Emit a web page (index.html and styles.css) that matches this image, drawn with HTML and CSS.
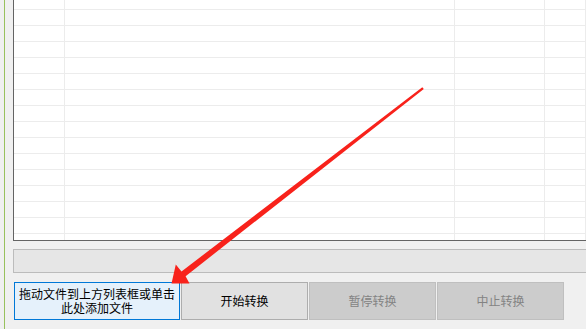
FILE: index.html
```html
<!DOCTYPE html>
<html lang="zh-CN">
<head>
<meta charset="UTF-8">
<title>格式转换</title>
<link rel="stylesheet" href="styles.css">
</head>
<body>
<div class="frame">
    <div class="content">
        <div class="file-list">
            <div class="rows">
                <div class="row"><span></span><span></span><span></span><span></span></div>
                <div class="row"><span></span><span></span><span></span><span></span></div>
                <div class="row"><span></span><span></span><span></span><span></span></div>
                <div class="row"><span></span><span></span><span></span><span></span></div>
                <div class="row"><span></span><span></span><span></span><span></span></div>
                <div class="row"><span></span><span></span><span></span><span></span></div>
                <div class="row"><span></span><span></span><span></span><span></span></div>
                <div class="row"><span></span><span></span><span></span><span></span></div>
                <div class="row"><span></span><span></span><span></span><span></span></div>
                <div class="row"><span></span><span></span><span></span><span></span></div>
                <div class="row"><span></span><span></span><span></span><span></span></div>
                <div class="row"><span></span><span></span><span></span><span></span></div>
                <div class="row"><span></span><span></span><span></span><span></span></div>
                <div class="row"><span></span><span></span><span></span><span></span></div>
                <div class="row"><span></span><span></span><span></span><span></span></div>
                <div class="row"><span></span><span></span><span></span><span></span></div>
            </div>
        </div>
        <div class="progress"></div>
        <div class="buttons">
            <button class="btn btn-add">拖动文件到上方列表框或单击<br>此处添加文件</button>
            <button class="btn">开始转换</button>
            <button class="btn" disabled>暂停转换</button>
            <button class="btn" disabled>中止转换</button>
        </div>
    </div>
</div>

<svg class="arrow" width="586" height="329" viewBox="0 0 586 329">
    <polygon points="422.3,87.2 423.8,88.9 185.6,276.2 189.5,283.5 171.5,283.5 175.8,264.5 181.5,271.5" fill="#f8221b"/>
</svg>
</body>
</html>
```

FILE: styles.css
```css
body {
    margin: 0;
    width: 586px;
    height: 329px;
    overflow: hidden;
    background-color: #f0f0f0;
    font-family: "Noto Sans CJK SC", "Microsoft YaHei", sans-serif;
    font-size: 12px;
    position: relative;
}

.frame {
    margin-left: 4px;
    height: 329px;
    border-left: 1px solid #98c15c;
}

.content {
    padding-left: 8px;
}

.file-list {
    height: 240px;
    background-color: #fff;
    border-left: 1px solid #646464;
    border-bottom: 1px solid #646464;
    overflow: hidden;
}

.rows {
    margin-top: -6px;
}

.row {
    display: grid;
    grid-template-columns: 51px 390px 90px 1fr;
    height: 15px;
    border-bottom: 1px solid #ececec;
}

.row span {
    border-right: 1px solid #ececec;
}

.progress {
    margin-top: 8px;
    height: 22px;
    background-color: #e6e6e6;
    border: 1px solid #bcbcbc;
    border-right: none;
}

.buttons {
    display: flex;
    gap: 1px;
    margin-top: 9px;
    padding-left: 1px;
}

.btn {
    height: 38px;
    width: 127px;
    margin: 0;
    padding: 0;
    font-family: inherit;
    font-size: 12px;
    line-height: 14px;
    color: #000;
    background-color: #e1e1e1;
    border: 1px solid #adadad;
}

.btn-add {
    width: 166px;
    background-color: #e5f1fb;
    border-color: #0078d7;
}

.btn:disabled {
    background-color: #cccccc;
    border-color: #bfbfbf;
    color: #838383;
}

.arrow {
    position: absolute;
    left: 0;
    top: 0;
    pointer-events: none;
}
```
